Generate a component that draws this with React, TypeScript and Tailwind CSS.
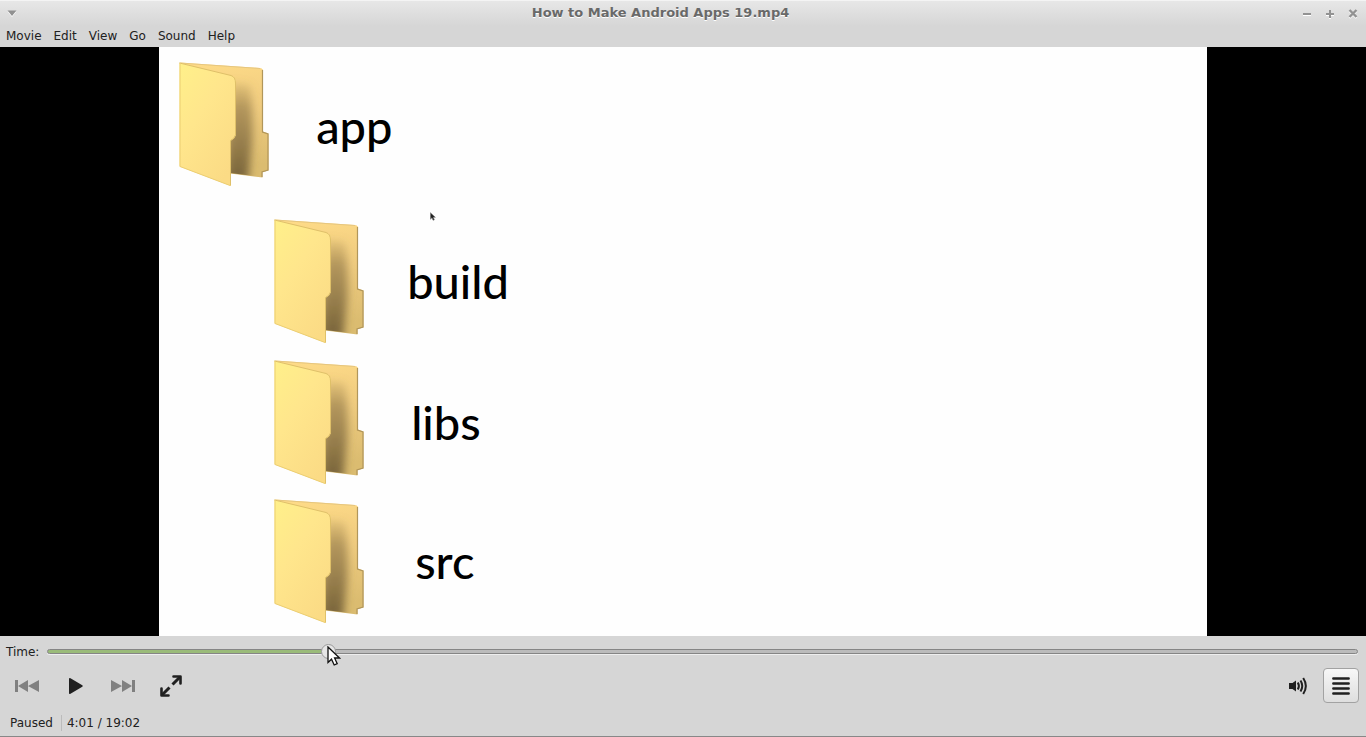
import { useId, useState } from "react";

const MENUS = ["Movie", "Edit", "View", "Go", "Sound", "Help"];

const FOLDERS = [
  { name: "app", row: "pl-[17px] pt-[13px]", label: "ml-11 pt-1" },
  { name: "build", row: "pl-28 pt-[29px]", label: "ml-10" },
  { name: "libs", row: "pl-28 pt-[13px]", label: "ml-11" },
  { name: "src", row: "pl-28 pt-[11px]", label: "ml-12" },
];

const DURATION = 1142;

function Folder() {
  const id = useId();
  return (
    <svg className="h-32 w-24 shrink-0" viewBox="0 0 96 128" aria-hidden="true">
      <defs>
        <linearGradient id={id + "f"} x1="0" y1="0" x2="0.7" y2="1">
          <stop offset="0" stopColor="#fff08a" />
          <stop offset="0.45" stopColor="#ffe68c" />
          <stop offset="1" stopColor="#fbdb85" />
        </linearGradient>
        <linearGradient id={id + "b"} x1="0" y1="0" x2="0.15" y2="1">
          <stop offset="0" stopColor="#ffdc88" />
          <stop offset="0.5" stopColor="#f0cc80" />
          <stop offset="1" stopColor="#dbbc70" />
        </linearGradient>
        <linearGradient id={id + "s"} x1="0" y1="0" x2="0" y2="1">
          <stop offset="0" stopColor="#9a8048" stopOpacity="0.15" />
          <stop offset="0.25" stopColor="#8c7444" stopOpacity="0.6" />
          <stop offset="1" stopColor="#6b5834" stopOpacity="0.9" />
        </linearGradient>
        <filter id={id + "blur"} x="-50%" y="-20%" width="200%" height="140%">
          <feGaussianBlur stdDeviation="4" />
        </filter>
        <clipPath id={id + "c"}>
          <path d="M3.500 3L84 8Q86.500 8.500 86.500 10.500V72L92 73.500V110L86 112V117L54 113V20Z" />
        </clipPath>
      </defs>
      <path d="M4 2.500L84 8Q87 8.500 87 10.500V71.500L92.500 73.500V110.500L86.500 112V117.500L54 113.500V20Z" fill={`url(#${id}b)`} />
      <g clipPath={`url(#${id}c)`}>
        <path d="M54 22L74 25Q78 60 76 84L72 122H50Z" fill={`url(#${id}s)`} filter={`url(#${id}blur)`} />
      </g>
      <path d="M86.500 10V72L92 74V110L86 112V117" fill="none" stroke="#b1965a" strokeWidth="1.200" />
      <path d="M3.500 3L84 8.500" stroke="#e6c67f" strokeWidth="1" />
      <path d="M3.500 3L55 15.500Q60 17 60 23V75L58 78.500L55 80.500V126L3.500 106.500Z" fill={`url(#${id}f)`} />
      <path d="M3.500 3L55 15.500Q59.500 17 59.500 23V75L57.500 78.500L54.500 80.500V125.500" fill="none" stroke="#dfc069" strokeWidth="1" />
      <path d="M4 3V106.500L54 125.500" fill="none" stroke="#ecce72" strokeWidth="1" />
    </svg>
  );
}

function Pointer({ className, dark = false }: { className: string; dark?: boolean }) {
  return (
    <svg className={"pointer-events-none absolute " + className} viewBox="0 0 14 20" aria-hidden="true">
      <path
        d="M1 1V16.500L4.500 13.200L7.200 19L10.200 17.700L7.600 12H12.500Z"
        fill={dark ? "#222" : "#fff"}
        stroke={dark ? "#777" : "#111"}
        strokeWidth="1.300"
      />
    </svg>
  );
}

export default function App() {
  const [time, setTime] = useState(241);
  const ratio = time / DURATION;
  const stamp = `${Math.floor(time / 60)}:${String(time % 60).padStart(2, "0")}`;

  return (
    <div className="flex min-h-screen flex-col border-b border-[#888] bg-[#d6d6d6] font-['DejaVu_Sans',sans-serif] text-xs text-[#212121]">
      <header className="flex h-[26px] items-center border-t border-[#f4f4f4] bg-linear-to-b from-[#e7e7e7] to-[#d6d6d6] pb-px pl-[6px] pr-[7px]">
        <button aria-label="Window menu" className="flex w-20 pl-px">
          <svg className="h-3 w-3" viewBox="0 0 12 12">
            <path d="M0.500 4.500H9.500L5 10Z" fill="#fff" />
            <path d="M0.500 3.500H9.500L5 9Z" fill="#919191" />
          </svg>
        </button>
        <h1 className="flex-1 pr-[66px] text-center text-[13px] font-bold text-[#696969] [text-shadow:0_1px_0_#fff]">
          How to Make Android Apps 19.mp4
        </h1>
        <div className="flex gap-[11px]">
          <button aria-label="Minimize">
            <svg className="h-3 w-3" viewBox="0 0 12 12">
              <path d="M2 8H10" stroke="#fff" strokeWidth="2" />
              <path d="M2 7H10" stroke="#929292" strokeWidth="2" />
            </svg>
          </button>
          <button aria-label="Maximize">
            <svg className="h-3 w-3" viewBox="0 0 12 12">
              <path d="M2 8H10M6 4V12" stroke="#fff" strokeWidth="2" />
              <path d="M2 7H10M6 3V11" stroke="#929292" strokeWidth="2" />
            </svg>
          </button>
          <button aria-label="Close">
            <svg className="h-3 w-3" viewBox="0 0 12 12">
              <path d="M2.500 4L9.500 11M9.500 4L2.500 11" stroke="#fff" strokeWidth="2" />
              <path d="M2.500 3L9.500 10M9.500 3L2.500 10" stroke="#929292" strokeWidth="2.400" />
            </svg>
          </button>
        </div>
      </header>

      <nav className="flex h-[21px] items-center gap-3 px-[6px] pb-[2px]">
        {MENUS.map((m) => (
          <button key={m}>{m}</button>
        ))}
      </nav>

      <main className="flex flex-1 justify-center bg-black">
        <div className="relative aspect-[1048/589] w-[76.7%] bg-[#fefefe]">
          {FOLDERS.map((f) => (
            <div key={f.name} className={"flex items-center " + f.row}>
              <Folder />
              <span className={"font-[Lato,sans-serif] text-[47px] font-medium leading-[60px] text-black " + f.label}>{f.name}</span>
            </div>
          ))}
          <Pointer className="left-[271px] top-[165px] h-[9px] w-[6px]" dark />
        </div>
      </main>

      <footer>
        <div className="flex h-[31px] items-center gap-2 px-[6px]">
          <label htmlFor="time">Time:</label>
          <div className="relative flex flex-1 items-center pr-[2px]">
            <input
              id="time"
              type="range"
              min={0}
              max={DURATION}
              value={time}
              onChange={(e) => setTime(Number(e.target.value))}
              style={{
                backgroundImage: `linear-gradient(to right, #9abb79 ${ratio * 100}%, #bbbbbb ${ratio * 100}%)`,
              }}
              className="h-[5px] w-full appearance-none rounded-full border border-[#858585] shadow-[0_1px_0_#eee] [&::-webkit-slider-thumb]:h-[15px] [&::-webkit-slider-thumb]:w-[15px] [&::-webkit-slider-thumb]:appearance-none [&::-webkit-slider-thumb]:rounded-full [&::-webkit-slider-thumb]:border [&::-webkit-slider-thumb]:border-[#999] [&::-webkit-slider-thumb]:bg-[#e6e6e6]"
            />
            <Pointer className="-top-[3px] left-[21.3%] h-5 w-[14px]" />
          </div>
        </div>

        <div className="flex h-[37px] items-center pl-3 pr-[7px] [&_svg]:block">
          <button aria-label="Previous" className="text-[#808080]">
            <svg className="h-[30px] w-[30px]" viewBox="0 0 30 30" fill="currentColor">
              <path d="M3 9H6V21H3ZM16 9V21L6 15ZM27 9V21L16 15Z" />
            </svg>
          </button>
          <button aria-label="Play" className="ml-[18px]">
            <svg className="h-[30px] w-[30px]" viewBox="0 0 30 30" fill="#202020">
              <path d="M9 8Q9 6.500 10.500 7.300L22.300 14.300Q23.300 15 22.300 15.700L10.500 22.700Q9 23.500 9 22Z" />
            </svg>
          </button>
          <button aria-label="Next" className="ml-[18px] text-[#808080]">
            <svg className="h-[30px] w-[30px]" viewBox="0 0 30 30" fill="currentColor">
              <path d="M3 9L14 15L3 21ZM14 9L24 15L14 21ZM24 9H27V21H24Z" />
            </svg>
          </button>
          <button aria-label="Fullscreen" className="ml-[18px]">
            <svg className="h-[30px] w-[30px]" viewBox="0 0 30 30" fill="none" stroke="#202020">
              <path d="M16.500 13.500L24 6M13.500 16.500L6 24" strokeWidth="3" />
              <path d="M17.500 5.500H24.500V12.500M5.500 17.500V24.500H12.500" strokeWidth="2.600" strokeLinecap="round" strokeLinejoin="round" />
            </svg>
          </button>
          <button aria-label="Volume" className="ml-auto">
            <svg className="h-5 w-5" viewBox="0 0 20 20" fill="none" stroke="#202020">
              <path d="M1 7H4.500L8 4.500V15.500L4.500 13H1Z" fill="#202020" stroke="none" />
              <path d="M9.800 6.500Q12 10 9.800 13.500" strokeWidth="2" />
              <path d="M12.500 4.500Q16 10 12.500 15.500" strokeWidth="2" />
              <path d="M15.200 2Q20.500 10 15.200 18" strokeWidth="2" />
            </svg>
          </button>
          <button
            aria-label="Playlist"
            className="ml-[15px] flex h-[35px] w-9 items-center justify-center rounded border border-[#a2a2a2] bg-linear-to-b from-[#f7f7f7] to-[#dedede]"
          >
            <svg className="h-5 w-5" viewBox="0 0 20 20" stroke="#202020" strokeWidth="2.400" strokeLinecap="round">
              <path d="M2.300 2.500H17.700M2.300 7.500H17.700M2.300 12.500H17.700M2.300 17.500H17.700" />
            </svg>
          </button>
        </div>

        <div className="flex h-8 items-center px-[10px] pt-[5px]">
          <span>Paused</span>
          <span className="ml-2 h-4 w-px bg-[#bbb]" />
          <span className="ml-[5px]">{stamp} / 19:02</span>
        </div>
      </footer>
    </div>
  );
}
